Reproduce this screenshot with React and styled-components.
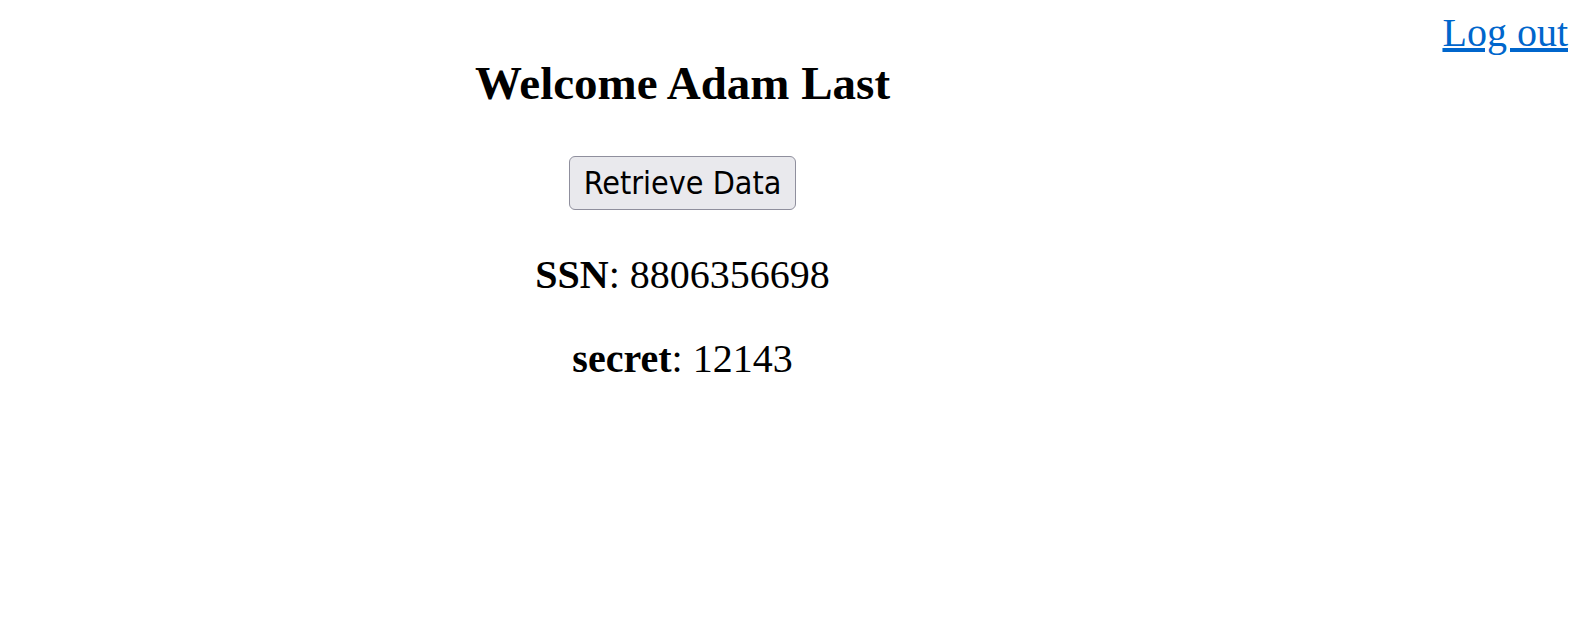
import React from 'react';
import styled, { createGlobalStyle } from 'styled-components';

const GlobalStyle = createGlobalStyle`
  body {
    margin: 0;
    background: #fff;
    color: #000;
    font-family: "Liberation Serif", "Times New Roman", serif;
  }
`;

const Page = styled.div`
  display: flex;
  align-items: flex-start;
`;

const Main = styled.main`
  width: 1365px;
  display: flex;
  flex-direction: column;
  align-items: center;
`;

const Aside = styled.nav`
  flex: 1;
  text-align: right;
  padding: 9px 5px 0 0;
`;

const LogoutLink = styled.a`
  font-size: 40px;
  color: #0066cc;
  text-decoration: underline;
`;

const Title = styled.h1`
  margin: 56px 0 0;
  font-size: 47px;
  font-weight: bold;
`;

const RetrieveButton = styled.button`
  margin-top: 46px;
  padding: 7px 14px;
  font-family: "DejaVu Sans Condensed", "DejaVu Sans", sans-serif;
  font-size: 32px;
  color: #000;
  background: #e9e9ed;
  border: 1.5px solid #8f8f9d;
  border-radius: 6px;
  cursor: pointer;
`;

const Field = styled.p`
  margin: ${(p) => p.$gap}px 0 0;
  font-size: 40px;
`;

const data = [
  { label: 'SSN', value: '8806356698', gap: 41 },
  { label: 'secret', value: '12143', gap: 37 },
];

export default function App() {
  return (
    <>
      <GlobalStyle />
      <Page>
        <Main>
          <Title>Welcome Adam Last</Title>
          <RetrieveButton type="button">Retrieve Data</RetrieveButton>
          {data.map((item) => (
            <Field key={item.label} $gap={item.gap}>
              <b>{item.label}</b>: {item.value}
            </Field>
          ))}
        </Main>
        <Aside>
          <LogoutLink href="#">Log out</LogoutLink>
        </Aside>
      </Page>
    </>
  );
}
